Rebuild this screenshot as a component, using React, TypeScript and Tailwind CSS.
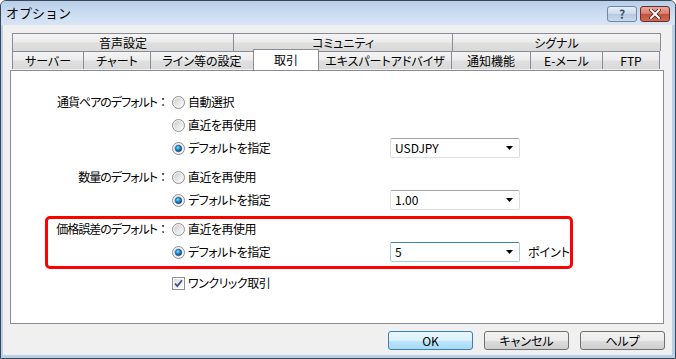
import React from "react";

function Radio({ checked }: { checked?: boolean }) {
  return (
    <svg width="13" height="13" viewBox="0 0 13 13" className="shrink-0">
      <defs>
        <linearGradient id="radioFill" x1="0" y1="0" x2="1" y2="1">
          <stop offset="0" stopColor="#cfcfcf" />
          <stop offset="1" stopColor="#fbfbfb" />
        </linearGradient>
        <radialGradient id="radioDot" cx="0.4" cy="0.35" r="0.7">
          <stop offset="0" stopColor="#9fe0ff" />
          <stop offset="0.45" stopColor="#1f8fd6" />
          <stop offset="1" stopColor="#0d3e73" />
        </radialGradient>
      </defs>
      <circle cx="6.5" cy="6.5" r="6" fill="#f4f4f4" stroke="#8e8f8f" />
      <circle cx="6.5" cy="6.5" r="4.5" fill="url(#radioFill)" />
      {checked && <circle cx="6.5" cy="6.5" r="3.2" fill="url(#radioDot)" stroke="#16456f" strokeWidth="0.6" />}
    </svg>
  );
}

function Check() {
  return (
    <svg width="13" height="13" viewBox="0 0 13 13" className="shrink-0">
      <defs>
        <linearGradient id="boxFill" x1="0" y1="0" x2="1" y2="1">
          <stop offset="0" stopColor="#dcdcdc" />
          <stop offset="1" stopColor="#ffffff" />
        </linearGradient>
      </defs>
      <rect x="0.5" y="0.5" width="12" height="12" fill="#ffffff" stroke="#8e8f8f" />
      <rect x="2" y="2" width="9" height="9" fill="url(#boxFill)" />
      <path d="M3 6.5 L5.3 9 L10 3.2" fill="none" stroke="#3c5489" strokeWidth="1.8" />
    </svg>
  );
}

function Combo({ value, focused }: { value: string; focused?: boolean }) {
  return (
    <div
      className={
        focused
          ? "w-[130px] h-[20px] flex items-center justify-between pl-[4px] pr-[6px] bg-white border border-[#a7cbe6] border-t-[#3c7fb1] rounded-[2px]"
          : "w-[130px] h-[20px] flex items-center justify-between pl-[4px] pr-[6px] bg-white border border-[#dcdee3] border-t-[#a3a5ab] rounded-[2px]"
      }
    >
      <span>{value}</span>
      <svg width="7" height="4" viewBox="0 0 7 4">
        <path d="M0 0 H7 L3.5 4 Z" fill="#000" />
      </svg>
    </div>
  );
}

function Option({ label, checked }: { label: string; checked?: boolean }) {
  return (
    <div className="w-[218px] h-[20px] flex items-center shrink-0">
      <Radio checked={checked} />
      <span className="ml-[3px] whitespace-nowrap tracking-[-0.5px]">{label}</span>
    </div>
  );
}

function Group({ label, children }: { label: string; children: React.ReactNode }) {
  return (
    <div className="flex">
      <div className="w-[121px] h-[20px] flex items-center justify-end whitespace-nowrap">
        <span className="tracking-[-1px]">{label}</span>
        <span className="[font-feature-settings:normal]">：</span>
      </div>
      <div className="ml-[3px] flex flex-col gap-[3px]">{children}</div>
    </div>
  );
}

const topTabs = [
  { label: "音声設定", w: "w-[221px]" },
  { label: "コミュニティ", w: "w-[219px]" },
  { label: "シグナル", w: "w-[209px] border-r" },
];

const tabBase =
  "h-[18px] flex items-center justify-center whitespace-nowrap border-l border-t border-[#898c95] bg-[linear-gradient(#f4f4f4,#ececec_45%,#dfdfdf_55%,#d9d9d9)]";

function Button({ label, primary }: { label: string; primary?: boolean }) {
  return (
    <div
      className={
        primary
          ? "w-[85px] h-[19px] flex items-center justify-center rounded-[3px] border border-[#3c7fb1] bg-[linear-gradient(#eaf6fd,#d9f0fc_50%,#bee6fd_50%,#a7d9f5)]"
          : "w-[85px] h-[19px] flex items-center justify-center rounded-[3px] border border-[#707070] bg-[linear-gradient(#f2f2f2,#ebebeb_50%,#dddddd_50%,#cfcfcf)]"
      }
    >
      {label}
    </div>
  );
}

export default function App() {
  return (
    <div className="w-[676px] h-[359px] flex flex-col border border-[#3a4656] rounded-t-[6px] bg-[#b9d0ea] overflow-hidden text-[12px] leading-none text-black font-['Noto_Sans_CJK_JP','Noto_Sans',sans-serif] [font-feature-settings:'palt']">
      {/* title bar */}
      <div className="h-[24px] shrink-0 flex items-start justify-between pl-[5px] pr-[5px] bg-[linear-gradient(#b7cee8,#cfdff2_60%,#d6e4f4)]">
        <span className="mt-[5px] text-[13px] [font-feature-settings:normal]">オプション</span>
        <div className="mt-[5px] flex gap-[3px]">
          <div className="w-[30px] h-[16px] flex items-center justify-center rounded-[3px] border border-[#7188a7] bg-[linear-gradient(#e6eef8,#cbdaec_50%,#b6c9e2_50%,#c9d8ec)] text-[12px] font-bold text-[#40546f]">
            ?
          </div>
          <div className="w-[30px] h-[16px] flex items-center justify-center rounded-[3px] border border-[#6b2e26] bg-[linear-gradient(#e9a99b,#d9796a_50%,#c3503f_50%,#d06a55)]">
            <svg width="12" height="10" viewBox="0 0 12 10">
              <path d="M2 1 L10 9 M10 1 L2 9" stroke="#4b2019" strokeWidth="3.6" strokeLinecap="square" />
              <path d="M2 1 L10 9 M10 1 L2 9" stroke="#ffffff" strokeWidth="2" strokeLinecap="square" />
            </svg>
          </div>
        </div>
      </div>

      {/* body */}
      <div className="flex-1 ml-[2px] mr-[3px] mb-[3px] bg-[#f0f0f0] flex flex-col">
        <div className="mt-[8px] ml-[9px] flex flex-col">
          <div className="flex">
            {topTabs.map((t) => (
              <div key={t.label} className={`${tabBase} ${t.w}`}>
                {t.label}
              </div>
            ))}
          </div>
          <div className="flex items-start">
            <div className={`${tabBase} w-[71px]`}>サーバー</div>
            <div className={`${tabBase} w-[67px]`}>チャート</div>
            <div className={`${tabBase} w-[103px]`}>ライン等の設定</div>
            <div className="relative z-10 -mt-[2px] -mr-px w-[66px] h-[21px] flex justify-center pt-[4px] border-l border-t border-r border-[#898c95] bg-white">
              取引
            </div>
            <div className={`${tabBase} w-[133px]`}>エキスパートアドバイザ</div>
            <div className={`${tabBase} w-[79px]`}>通知機能</div>
            <div className={`${tabBase} w-[72px]`}>E-メール</div>
            <div className={`${tabBase} w-[58px] border-r`}>FTP</div>
          </div>
        </div>

        {/* panel */}
        <div className="ml-[7px] w-[654px] h-[254px] border border-[#898c95] bg-white pt-[21px] pl-[34px] flex flex-col">
          <div className="pl-[3px]">
            <Group label="通貨ペアのデフォルト">
              <Option label="自動選択" />
              <Option label="直近を再使用" />
              <div className="flex items-center">
                <Option label="デフォルトを指定" checked />
                <Combo value="USDJPY" />
              </div>
            </Group>
          </div>
          <div className="pl-[3px] mt-[9px]">
            <Group label="数量のデフォルト">
              <Option label="直近を再使用" />
              <div className="flex items-center">
                <Option label="デフォルトを指定" checked />
                <Combo value="1.00" />
              </div>
            </Group>
          </div>
          <div className="mt-[6px] w-[528px] border-[3px] border-[#ff0000] rounded-[5px] pb-[4px]">
            <Group label="価格誤差のデフォルト">
              <Option label="直近を再使用" />
              <div className="flex items-center">
                <Option label="デフォルトを指定" checked />
                <Combo value="5" focused />
                <span className="ml-[8px] whitespace-nowrap">ポイント</span>
              </div>
            </Group>
          </div>
          <div className="pl-[3px] mt-[4px] flex">
            <div className="ml-[124px] h-[20px] flex items-center">
              <Check />
              <span className="ml-[3px] whitespace-nowrap tracking-[-0.5px]">ワンクリック取引</span>
            </div>
          </div>
        </div>

        {/* buttons */}
        <div className="mt-[7px] pr-[7px] flex justify-end gap-[11px]">
          <Button label="OK" primary />
          <Button label="キャンセル" />
          <Button label="ヘルプ" />
        </div>
      </div>
    </div>
  );
}
